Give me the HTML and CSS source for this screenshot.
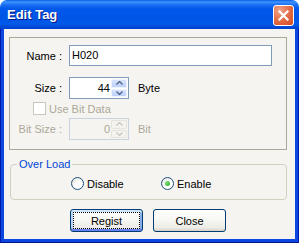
FILE: index.html
```html
<!DOCTYPE html>
<html lang="en">
<head>
    <meta charset="UTF-8">
    <title>Edit Tag</title>
    <link rel="stylesheet" href="styles.css">
</head>
<body>
    <div class="window">
        <div class="titlebar">
            <span class="title">Edit Tag</span>
            <button class="close-x" aria-label="Close">
                <svg width="11" height="11" viewBox="0 0 11 11">
                    <path d="M1.5 1.5 L9.5 9.5 M9.5 1.5 L1.5 9.5" stroke="#fff" stroke-width="2.2" stroke-linecap="square"/>
                </svg>
            </button>
        </div>
        <div class="frame">
            <div class="client">
                <div class="group main">
                    <div class="field">
                        <label>Name :</label>
                        <div class="edit wide">H020</div>
                    </div>
                    <div class="field size">
                        <label>Size :</label>
                        <div class="spin">
                            <span class="val">44</span>
                            <div class="spin-btns">
                                <span class="sbtn"><svg width="7" height="4" viewBox="0 0 7 4"><path d="M0.5 3.5 L3.5 0.5 L6.5 3.5" fill="none" stroke="#4d6185" stroke-width="1.3"/></svg></span>
                                <span class="sbtn"><svg width="7" height="4" viewBox="0 0 7 4"><path d="M0.5 0.5 L3.5 3.5 L6.5 0.5" fill="none" stroke="#4d6185" stroke-width="1.3"/></svg></span>
                            </div>
                        </div>
                        <span class="unit">Byte</span>
                    </div>
                    <div class="check disabled">
                        <span class="box"></span>
                        <span>Use Bit Data</span>
                    </div>
                    <div class="field disabled bits">
                        <label>Bit Size :</label>
                        <div class="spin">
                            <span class="val">0</span>
                            <div class="spin-btns">
                                <span class="sbtn"><svg width="7" height="4" viewBox="0 0 7 4"><path d="M0.5 3.5 L3.5 0.5 L6.5 3.5" fill="none" stroke="#c9c7ba" stroke-width="1.3"/></svg></span>
                                <span class="sbtn"><svg width="7" height="4" viewBox="0 0 7 4"><path d="M0.5 0.5 L3.5 3.5 L6.5 0.5" fill="none" stroke="#c9c7ba" stroke-width="1.3"/></svg></span>
                            </div>
                        </div>
                        <span class="unit">Bit</span>
                    </div>
                </div>

                <fieldset class="overload">
                    <legend>Over Load</legend>
                    <div class="radios">
                        <div class="radio-item first"><span class="radio"></span>Disable</div>
                        <div class="radio-item"><span class="radio checked"></span>Enable</div>
                    </div>
                </fieldset>

                <div class="buttons">
                    <button class="btn default">Regist</button>
                    <button class="btn">Close</button>
                </div>
            </div>
        </div>
    </div>
</body>
</html>
```

FILE: styles.css
```css
body {
    margin: 0;
    background: #ffffff;
    font-family: "Liberation Sans", Arial, sans-serif;
    font-size: 11px;
    color: #000000;
}

.window {
    width: 299px;
    height: 243px;
    display: flex;
    flex-direction: column;
    border-radius: 7px 7px 0 0;
    overflow: hidden;
}

/* title bar */
.titlebar {
    height: 29px;
    flex: none;
    display: flex;
    align-items: flex-start;
    justify-content: space-between;
    padding: 5px 5px 0 7px;
    box-sizing: border-box;
    background: linear-gradient(to bottom, #0a5ee6 0, #3d95ff 2px, #1a6cf2 5px, #0058ea 9px, #0055e5 18px, #005ae9 24px, #0048d6 27px, #003fcc 29px);
}

.title {
    color: #ffffff;
    font-weight: bold;
    font-size: 13px;
    line-height: 20px;
    text-shadow: 1px 1px 0 #0a1883;
}

.close-x {
    width: 21px;
    height: 21px;
    padding: 0;
    border: 1px solid #ffffff;
    border-radius: 3px;
    background: radial-gradient(circle at 30% 25%, #f0a58a 0, #e4714c 45%, #d5491f 100%);
    display: flex;
    align-items: center;
    justify-content: center;
}

/* window frame */
.frame {
    flex: 1;
    display: flex;
    padding: 0 3px 3px 3px;
    background: #0b46e1;
    border: 1px solid #001aa8;
    border-top: none;
    border-bottom-color: #00138c;
}

.client {
    flex: 1;
    background: #f5f4f0;
    display: flex;
    flex-direction: column;
}

/* first group */
.group.main {
    width: 278px;
    height: 113px;
    box-sizing: border-box;
    margin: 8px 0 0 5px;
    padding-top: 7px;
    border: 1px solid #aca899;
}

.field {
    display: flex;
    align-items: center;
}

.field label {
    width: 52px;
    margin-right: 7px;
    text-align: right;
}

.edit {
    height: 21px;
    box-sizing: border-box;
    border: 1px solid #7f9db9;
    background: #ffffff;
    line-height: 19px;
    padding-left: 2px;
}

.edit.wide {
    width: 203px;
}

.field.size {
    margin-top: 11px;
}

.spin {
    width: 60px;
    height: 22px;
    box-sizing: border-box;
    border: 1px solid #7f9db9;
    background: #ffffff;
    display: flex;
}

.spin .val {
    flex: 1;
    text-align: right;
    line-height: 20px;
    padding-right: 1px;
}

.spin-btns {
    width: 16px;
    display: flex;
    flex-direction: column;
    gap: 1px;
    padding: 1px 1px 1px 0;
}

.sbtn {
    flex: 1;
    display: flex;
    align-items: center;
    justify-content: center;
    border-radius: 2px;
    background: linear-gradient(to bottom, #dbe6fd, #b8cdf9);
    box-shadow: inset 0 0 0 1px #eef3fe;
}

.unit {
    margin-left: 9px;
}

.check {
    display: flex;
    align-items: center;
    margin: 3px 0 0 23px;
    height: 13px;
}

.check .box {
    width: 13px;
    height: 13px;
    box-sizing: border-box;
    border: 1px solid #cac8bb;
    background: #ffffff;
    margin-right: 3px;
}

.disabled {
    color: #aca899;
}

.field.bits {
    margin-top: 3px;
}

.disabled .spin {
    border-color: #c9d3df;
    background: #f5f4f0;
}

.disabled .sbtn {
    background: #f4f3ee;
    box-shadow: inset 0 0 0 1px #e5e3da;
}

/* over load group */
.overload {
    width: 277px;
    height: 42px;
    box-sizing: border-box;
    margin: 8px 0 0 6px;
    padding: 0;
    border: 1px solid #d0d0bf;
    border-radius: 4px;
}

.overload legend {
    color: #0046d5;
    margin-left: 6px;
    padding: 0 2px;
    line-height: 13px;
}

.radios {
    display: flex;
    margin-top: 6px;
    padding-left: 60px;
}

.radio-item {
    display: flex;
    align-items: center;
    height: 13px;
}

.radio-item.first {
    width: 90px;
}

.radio {
    width: 13px;
    height: 13px;
    box-sizing: border-box;
    border-radius: 50%;
    border: 1px solid #1c5180;
    background: radial-gradient(circle at 65% 65%, #ffffff 0, #ffffff 35%, #dcdad0 100%);
    margin-right: 3px;
    display: flex;
    align-items: center;
    justify-content: center;
}

.radio.checked::after {
    content: "";
    width: 5px;
    height: 5px;
    border-radius: 50%;
    background: radial-gradient(circle at 35% 35%, #7fe07a, #21a121);
}

/* buttons */
.buttons {
    display: flex;
    gap: 10px;
    margin: 9px 0 0 66px;
}

.btn {
    width: 73px;
    height: 23px;
    padding: 0;
    font-family: "Liberation Sans", Arial, sans-serif;
    font-size: 11px;
    color: #000000;
    border: 1px solid #003c74;
    border-radius: 3px;
    background: linear-gradient(to bottom, #ffffff 0, #f6f6f2 50%, #ecebe6 85%, #d6d0c5 100%);
}

.btn.default {
    box-shadow: inset 0 2px 0 #cee7ff, inset 0 -2px 0 #6982ee, inset 2px 0 0 #bcd4f6, inset -2px 0 0 #89ade4;
    outline: 1px dotted #000000;
    outline-offset: -4px;
}
```
